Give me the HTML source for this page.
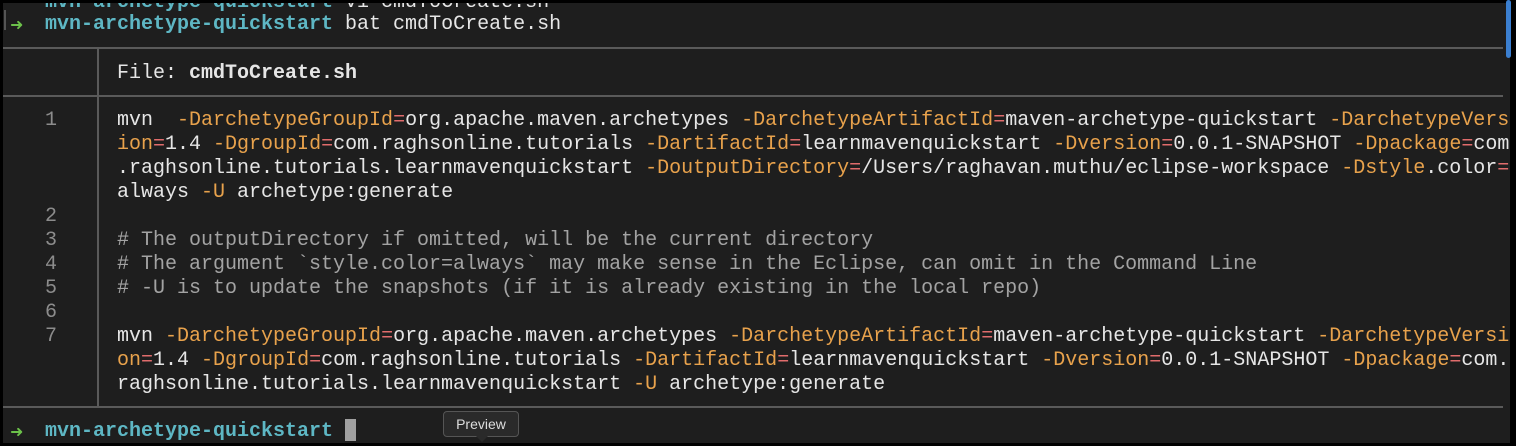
<!DOCTYPE html>
<html><head><style>
body{margin:0;width:1516px;height:446px;background:#000;overflow:hidden;position:relative;font-family:"Liberation Mono",monospace;font-size:20px;}
#t{position:absolute;left:3px;top:0;width:1507px;height:443px;background:#1e1e1e;}
.l{position:absolute;white-space:pre;line-height:24px;color:#e6e6e6;}
.o{color:#e8a24c}.e{color:#e06c6c}.c{color:#a3a3a3}.n{color:#8c8c8c}
.p{color:#5eb7c4;font-weight:bold}.a{color:#6cc14a;font-weight:bold;font-family:"DejaVu Sans",sans-serif;font-size:16px}
.h{position:absolute;left:3px;width:1500px;height:2px;background:#5a5a5a}
</style></head><body>
<div id="t"></div>
<div class="l" style="left:45px;top:-9px"><span class="p">mvn-archetype-quickstart</span> vi cmdToCreate.sh</div>
<div style="position:absolute;left:3px;top:0;width:1507px;height:3px;background:#000"></div>
<div class="l" style="left:10px;top:13px"><span class="a">➜</span></div>
<div class="l" style="left:45px;top:13px"><span class="p">mvn-archetype-quickstart</span> bat cmdToCreate.sh</div>
<div style="position:absolute;left:4px;top:10px;width:2px;height:20px;background:#555"></div>
<div style="position:absolute;left:1506px;top:0;width:5px;height:58px;background:#3b7fd0;border-radius:3px"></div>
<div class="h" style="top:47px"></div>
<div class="h" style="top:95px"></div>
<div class="h" style="top:406px"></div>
<div style="position:absolute;left:97px;top:48px;width:2px;height:359px;background:#5a5a5a"></div>
<div class="l" style="left:117px;top:62px">File: <b>cmdToCreate.sh</b></div>
<div class="l n" style="left:45px;top:109px">1</div>
<div class="l n" style="left:45px;top:205px">2</div>
<div class="l n" style="left:45px;top:229px">3</div>
<div class="l n" style="left:45px;top:253px">4</div>
<div class="l n" style="left:45px;top:277px">5</div>
<div class="l n" style="left:45px;top:301px">6</div>
<div class="l n" style="left:45px;top:325px">7</div>
<div class="l" style="left:117px;top:109px">mvn  <span class="o">-DarchetypeGroupId</span><span class="e">=</span>org.apache.maven.archetypes <span class="o">-DarchetypeArtifactId</span><span class="e">=</span>maven-archetype-quickstart <span class="o">-DarchetypeVers</span>
<span class="o">ion</span><span class="e">=</span>1.4 <span class="o">-DgroupId</span><span class="e">=</span>com.raghsonline.tutorials <span class="o">-DartifactId</span><span class="e">=</span>learnmavenquickstart <span class="o">-Dversion</span><span class="e">=</span>0.0.1-SNAPSHOT <span class="o">-Dpackage</span><span class="e">=</span>com
.raghsonline.tutorials.learnmavenquickstart <span class="o">-DoutputDirectory</span><span class="e">=</span>/Users/raghavan.muthu/eclipse-workspace <span class="o">-Dstyle</span>.color<span class="e">=</span>
always <span class="o">-U</span> archetype:generate</div>
<div class="l c" style="left:117px;top:229px"># The outputDirectory if omitted, will be the current directory
# The argument `style.color=always` may make sense in the Eclipse, can omit in the Command Line
# -U is to update the snapshots (if it is already existing in the local repo)</div>
<div class="l" style="left:117px;top:325px">mvn <span class="o">-DarchetypeGroupId</span><span class="e">=</span>org.apache.maven.archetypes <span class="o">-DarchetypeArtifactId</span><span class="e">=</span>maven-archetype-quickstart <span class="o">-DarchetypeVersi</span>
<span class="o">on</span><span class="e">=</span>1.4 <span class="o">-DgroupId</span><span class="e">=</span>com.raghsonline.tutorials <span class="o">-DartifactId</span><span class="e">=</span>learnmavenquickstart <span class="o">-Dversion</span><span class="e">=</span>0.0.1-SNAPSHOT <span class="o">-Dpackage</span><span class="e">=</span>com.
raghsonline.tutorials.learnmavenquickstart <span class="o">-U</span> archetype:generate</div>
<div class="l" style="left:10px;top:420px"><span class="a">➜</span></div>
<div class="l" style="left:45px;top:420px"><span class="p">mvn-archetype-quickstart</span></div>
<div style="position:absolute;left:345px;top:419px;width:11px;height:22px;background:#a0a0a0"></div>
<div style="position:absolute;left:443px;top:411px;width:74px;height:24px;background:#2a2a2a;border:1px solid #555;border-radius:4px;color:#ddd;font-family:'Liberation Sans',sans-serif;font-size:14px;line-height:24px;text-align:center">Preview</div>
<div style="position:absolute;left:476px;top:436px;width:0;height:0;border-left:6px solid transparent;border-right:6px solid transparent;border-top:6px solid #2a2a2a"></div>
<div style="position:absolute;left:0;top:443px;width:1516px;height:3px;background:#000"></div>
</body></html>
